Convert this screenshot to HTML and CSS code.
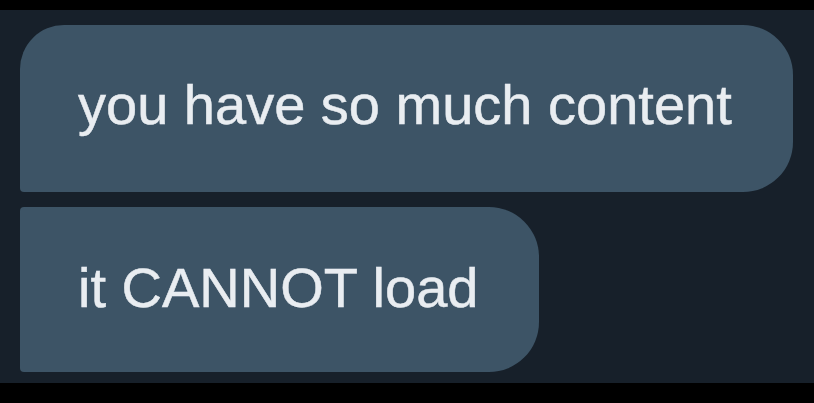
FILE: index.html
```html
<!DOCTYPE html>
<html lang="en">
<head>
<meta charset="utf-8">
<title>Messages</title>
<link rel="stylesheet" href="styles.css">
</head>
<body>
<div class="frame">
  <div class="pane">
    <div class="bubble bubble-first">you have so much content</div>
    <div class="bubble bubble-last">it CANNOT load</div>
  </div>
</div>
</body>
</html>
```
FILE: styles.css
```css
html, body {
  margin: 0;
  padding: 0;
  background: #000;
}
.frame {
  width: 814px;
  height: 403px;
  padding-top: 10px;
  box-sizing: border-box;
  background: #000;
}
.pane {
  height: 373px;
  box-sizing: border-box;
  background: #17202a;
  padding: 15px 0 0 20px;
  display: flex;
  flex-direction: column;
  align-items: flex-start;
  gap: 15px;
}
.bubble {
  background: #3d5466;
  color: #e9edf1;
  font-family: "Liberation Sans", Arial, sans-serif;
  font-size: 56px;
  line-height: 64px;
  -webkit-text-stroke: 0.5px #e9edf1;
  padding: 48px 61px 55px 58px;
  white-space: nowrap;
}
.bubble-first {
  border-radius: 44px 50px 50px 4px;
}
.bubble-last {
  padding-top: 49px;
  padding-bottom: 52px;
  border-radius: 4px 50px 50px 4px;
}
```
